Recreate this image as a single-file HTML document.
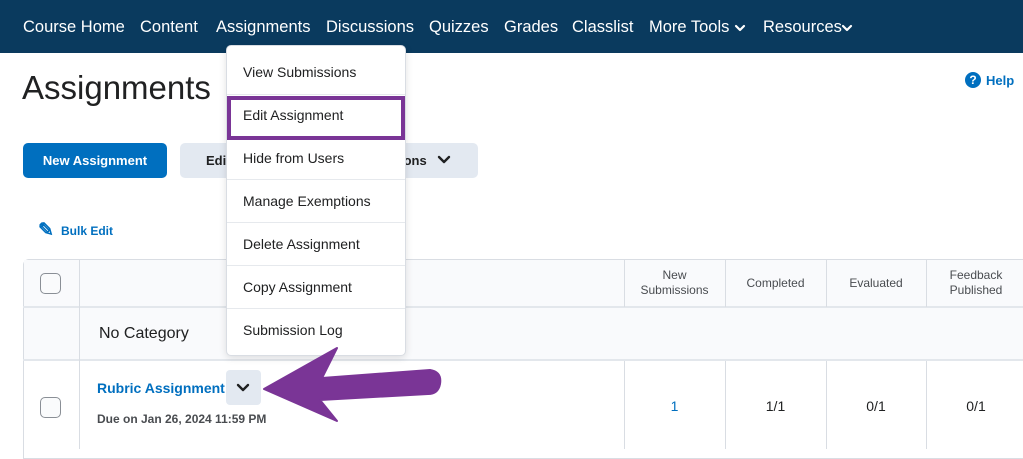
<!DOCTYPE html>
<html><head><meta charset="utf-8"><style>
*{margin:0;padding:0;box-sizing:border-box}
body{width:1023px;height:449px;overflow:hidden;background:#fff;font-family:"Liberation Sans",sans-serif;position:relative;color:#202122}
.nav{position:absolute;left:0;top:0;width:1023px;height:53px;background:#0a3a5e}
.nav span{position:absolute;top:18px;color:#fff;font-size:16.5px;white-space:nowrap}
.abs{position:absolute;white-space:nowrap}
.tbl{position:absolute;left:23px;top:259px;width:1010px;height:200px;border:1px solid #d9dde3;border-radius:6px 0 0 0}
.vl{position:absolute;width:1px;background:#d9dde3}
.hl{position:absolute;left:23px;width:1000px;height:2px;background:#e3e7ec}
.cb{position:absolute;left:40px;width:21px;height:21px;border:1.5px solid #8a8f96;border-radius:5px;background:#fafbfc}
.menu{position:absolute;left:226px;top:45px;width:180px;height:311px;background:#fff;border:1px solid #d9dde3;border-radius:5px;box-shadow:0 2px 8px rgba(0,0,0,.12)}
.mi{position:absolute;left:0;width:178px;height:43px;border-bottom:1px solid #e6e9ed;font-size:14px;padding:14px 0 0 16px;line-height:14px;color:#202122}
.th{font-size:12px;color:#494c50;text-align:center;line-height:15px}
</style></head><body>
<div class="nav">
<span style="left:23px">Course Home</span><span style="left:140px">Content</span><span style="left:216px">Assignments</span><span style="left:326px">Discussions</span><span style="left:429px">Quizzes</span><span style="left:504px">Grades</span><span style="left:572px">Classlist</span><span style="left:649px">More Tools</span><span style="left:763px">Resources</span>
</div>
<div class="abs" style="left:22px;top:69px;font-size:33px;color:#202122">Assignments</div>
<div class="abs" style="left:965px;top:72px;width:16px;height:16px;border-radius:50%;background:#006fbf;color:#fff;font-size:12px;font-weight:bold;text-align:center;line-height:16px">?</div>
<div class="abs" style="left:986px;top:73px;font-size:13px;font-weight:bold;color:#006fbf">Help</div>
<div class="abs" style="left:23px;top:143px;width:144px;height:35px;background:#006fbf;border-radius:5px;color:#fff;font-size:13px;font-weight:bold;text-align:center;line-height:35px">New Assignment</div>
<div class="abs" style="left:180px;top:143px;width:298px;height:35px;background:#e3e9f1;border-radius:5px;font-size:13px;font-weight:bold;line-height:35px;color:#202122"><span style="position:absolute;left:26px">Edit</span><span style="position:absolute;left:220px">ions</span></div>
<div class="abs" style="left:38px;top:219px;font-size:19px;font-weight:bold;color:#006fbf">✎</div>
<div class="abs" style="left:61px;top:224px;font-size:12px;font-weight:bold;color:#006fbf">Bulk Edit</div>
<div class="tbl"></div>
<div class="abs" style="left:24px;top:260px;width:999px;height:100px;background:#f9fafc"></div>
<div class="hl" style="top:306px"></div><div class="hl" style="top:359px"></div>
<div class="vl" style="left:79px;top:259px;height:190px"></div>
<div class="vl" style="left:624px;top:259px;height:48px"></div><div class="vl" style="left:725px;top:259px;height:48px"></div><div class="vl" style="left:826px;top:259px;height:48px"></div><div class="vl" style="left:926px;top:259px;height:48px"></div>
<div class="vl" style="left:624px;top:361px;height:88px"></div><div class="vl" style="left:725px;top:361px;height:88px"></div><div class="vl" style="left:826px;top:361px;height:88px"></div><div class="vl" style="left:926px;top:361px;height:88px"></div>
<div class="cb" style="top:273px"></div><div class="cb" style="top:397px"></div>
<div class="abs th" style="left:624px;top:268px;width:101px">New<br>Submissions</div>
<div class="abs th" style="left:725px;top:276px;width:101px">Completed</div>
<div class="abs th" style="left:826px;top:276px;width:100px">Evaluated</div>
<div class="abs th" style="left:926px;top:268px;width:100px">Feedback<br>Published</div>
<div class="abs" style="left:99px;top:325px;font-size:16px">No Category</div>
<div class="abs" style="left:97px;top:380px;font-size:14px;font-weight:bold;color:#006fbf">Rubric Assignment</div>
<div class="abs" style="left:226px;top:370px;width:35px;height:35px;background:#e3e9f1;border-radius:4px"></div>
<div class="abs" style="left:97px;top:412px;font-size:12px;font-weight:bold;color:#494c50">Due on Jan 26, 2024 11:59 PM</div>
<div class="abs" style="left:624px;top:398px;width:101px;text-align:center;font-size:14px;color:#006fbf">1</div>
<div class="abs" style="left:725px;top:398px;width:101px;text-align:center;font-size:14px">1/1</div>
<div class="abs" style="left:826px;top:398px;width:100px;text-align:center;font-size:14px">0/1</div>
<div class="abs" style="left:926px;top:398px;width:100px;text-align:center;font-size:14px">0/1</div>
<svg class="abs" style="left:0;top:0" width="1023" height="449" fill="none" stroke-linecap="round" stroke-linejoin="round">
<polyline points="736,26 740,30 744,26" stroke="#fff" stroke-width="2.2"/>
<polyline points="843,26 847,30 851,26" stroke="#fff" stroke-width="2.2"/>
<polyline points="439,157 444,162 449,157" stroke="#202122" stroke-width="2.4"/>
<polyline points="238,385 243,390 248,385" stroke="#202122" stroke-width="2.4"/>
</svg>
<div class="menu">
<div class="mi" style="top:5px;height:44px">View Submissions</div>
<div class="mi" style="top:48px">Edit Assignment</div>
<div class="mi" style="top:91px">Hide from Users</div>
<div class="mi" style="top:134px">Manage Exemptions</div>
<div class="mi" style="top:177px">Delete Assignment</div>
<div class="mi" style="top:220px">Copy Assignment</div>
<div class="mi" style="top:263px;border:none">Submission Log</div>
</div>
<div class="abs" style="left:227px;top:96px;width:178px;height:44px;border:4px solid #7a3596"></div>
<svg class="abs" style="left:0;top:0" width="1023" height="449"><path d="M264 389 L337 348 L322 378 L430 370 Q442 372 440 384 Q438 394 428 394 L320 400 L337 421 Z" fill="#7a3596" stroke="#7a3596" stroke-width="2" stroke-linejoin="round"/></svg>
</body></html>
